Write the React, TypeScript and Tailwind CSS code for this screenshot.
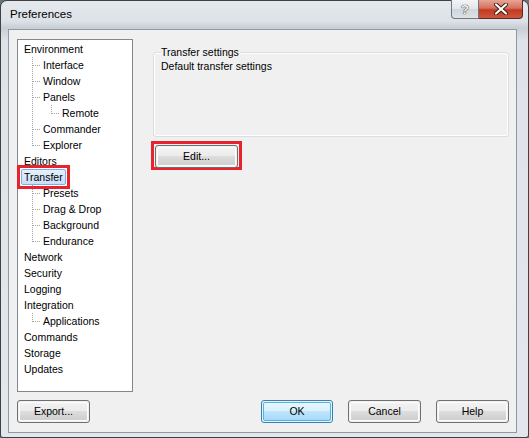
import React from "react";

type Node = { label: string; level: number; lines: ("none" | "pass" | "tee" | "end")[]; selected?: boolean };

const F = { fontFamily: '"Liberation Sans", Arial, sans-serif' };

const rows: Node[] = [
  { label: "Environment", level: 0, lines: [] },
  { label: "Interface", level: 1, lines: ["tee"] },
  { label: "Window", level: 1, lines: ["tee"] },
  { label: "Panels", level: 1, lines: ["tee"] },
  { label: "Remote", level: 2, lines: ["pass", "end"] },
  { label: "Commander", level: 1, lines: ["tee"] },
  { label: "Explorer", level: 1, lines: ["end"] },
  { label: "Editors", level: 0, lines: [] },
  { label: "Transfer", level: 0, lines: [], selected: true },
  { label: "Presets", level: 1, lines: ["tee"] },
  { label: "Drag & Drop", level: 1, lines: ["tee"] },
  { label: "Background", level: 1, lines: ["tee"] },
  { label: "Endurance", level: 1, lines: ["end"] },
  { label: "Network", level: 0, lines: [] },
  { label: "Security", level: 0, lines: [] },
  { label: "Logging", level: 0, lines: [] },
  { label: "Integration", level: 0, lines: [] },
  { label: "Applications", level: 1, lines: ["end"] },
  { label: "Commands", level: 0, lines: [] },
  { label: "Storage", level: 0, lines: [] },
  { label: "Updates", level: 0, lines: [] },
];

function Connector({ kind }: { kind: "none" | "pass" | "tee" | "end" }) {
  return (
    <svg width="19" height="16" className="shrink-0 block" shapeRendering="crispEdges">
      {kind !== "none" && (
        <line
          x1="8.5"
          y1="0"
          x2="8.5"
          y2={kind === "end" ? 9 : 16}
          stroke="#a0a0a0"
          strokeWidth="1"
          strokeDasharray="1 1"
        />
      )}
      {(kind === "tee" || kind === "end") && (
        <line x1="9" y1="8.5" x2="17" y2="8.5" stroke="#a0a0a0" strokeWidth="1" strokeDasharray="1 1" />
      )}
    </svg>
  );
}

function TreeRow({ n }: { n: Node }) {
  return (
    <div className="flex h-[16px] items-center">
      <div className="w-[6px] shrink-0" />
      {n.lines.map((k, i) => (
        <Connector key={i} kind={k} />
      ))}
      {n.selected ? (
        <div className="relative flex items-center">
          <div className="absolute -left-[7px] -right-[4px] -top-[4px] -bottom-[4px] border-[3px] border-[#e8232b]" />
          <span className="-ml-[3px] px-[2px] h-[16px] flex items-center rounded-[2px] border border-[#84acdd] bg-gradient-to-b from-[#e6f0fb] to-[#c9defa] leading-none text-[10.5px] text-black">
            {n.label}
          </span>
        </div>
      ) : (
        <span className="leading-none text-[10.5px] text-black whitespace-nowrap">{n.label}</span>
      )}
    </div>
  );
}

function Button({ label, w, primary }: { label: string; w: string; primary?: boolean }) {
  return (
    <div
      className={`${w} h-[23px] rounded-[3px] border ${
        primary ? "border-[#3c7fb1]" : "border-[#707070]"
      } p-px`}
    >
      <div
        className={`h-full w-full rounded-[2px] flex items-center justify-center text-[10.5px] text-black ${
          primary
            ? "bg-[linear-gradient(#eaf6fd_0%,#d9f0fc_50%,#bee6fd_50%,#a7d9f5_100%)] border border-[#48b7f0]"
            : "bg-[linear-gradient(#f2f2f2_0%,#ebebeb_50%,#dddddd_50%,#cfcfcf_100%)] border border-[#fcfcfc]"
        }`}
      >
        {label}
      </div>
    </div>
  );
}

export default function App() {
  return (
    <div style={F} className="w-[529px] h-[438px] bg-[#6b7077]">
      <div className="w-[529px] h-[438px] flex flex-col rounded-t-[7px] rounded-b-[3px] border border-[#3e4146] bg-[linear-gradient(#e4e9ee_0%,#dde2e8_20px,#c9ced4_27px,#dfe3e8_40px,#e3e7ec_100%)] pl-[7px] pr-[11px] pb-[4px]">
        {/* title bar */}
        <div className="h-[28px] flex items-start justify-between">
          <div className="pt-[8px] pl-[2px] text-[11.5px] text-black leading-none">Preferences</div>
          <div className="flex -mr-[6px] -mt-px">
            <div className="w-[28px] h-[19px] rounded-bl-[4px] border border-[#6f7680] border-t-0 bg-[linear-gradient(#f2f4f6_0%,#e2e6ea_50%,#cfd5db_50%,#dde2e7_100%)] flex items-center justify-center">
              <span className="text-[13px] font-bold leading-none text-[#f4f4f4] [text-shadow:0_0_1px_#222,0_0_1px_#222]">?</span>
            </div>
            <div className="w-[44px] h-[19px] rounded-br-[4px] border border-l-0 border-t-0 border-[#5c2a24] bg-[linear-gradient(#e8a597_0%,#d4715e_45%,#c2391f_55%,#d0573f_100%)] flex items-center justify-center">
              <svg width="14" height="12" viewBox="0 0 14 12">
                <path d="M2 1.5 L12 10.5 M12 1.5 L2 10.5" stroke="#3a1a14" strokeWidth="4" strokeLinecap="round" />
                <path d="M2 1.5 L12 10.5 M12 1.5 L2 10.5" stroke="#ffffff" strokeWidth="2.2" strokeLinecap="round" />
              </svg>
            </div>
          </div>
        </div>
        {/* client area */}
        <div className="flex-1 border border-[#8e99a6] bg-[#f0f0f0] flex flex-col pl-[8px] pr-[7px] pt-[9px]">
          <div className="flex">
            <div className="w-[116px] shrink-0 h-[353px] border border-[#828790] bg-white pt-[1px]">
              {rows.map((n, i) => (
                <TreeRow key={i} n={n} />
              ))}
            </div>
            <div className="ml-[20px] flex-1 pt-[7px]">
              <div className="relative w-[356px] h-[91px] pt-[6px]">
                <div className="h-[85px] rounded-[3px] border border-[#d5dfe5] shadow-[inset_0_0_0_1px_#ffffff] px-[7px] pt-[6px]">
                  <div className="text-[10.5px] leading-[14px] text-black">Default transfer settings</div>
                </div>
                <div className="absolute left-[8px] top-0 bg-[#f0f0f0] pr-[1px] text-[10.5px] leading-[12px] text-black">
                  Transfer settings
                </div>
              </div>
              <div className="mt-[4px] -ml-[2px] w-[91px] h-[29px] border-[3px] border-[#e8232b] p-px">
                <Button label="Edit..." w="w-[83px] h-[21px]" />
              </div>
            </div>
          </div>
          <div className="mt-[8px] flex items-center">
            <Button label="Export..." w="w-[73px]" />
            <div className="flex-1" />
            <div className="flex gap-[15px]">
              <Button label="OK" w="w-[72px]" primary />
              <Button label="Cancel" w="w-[73px]" />
              <Button label="Help" w="w-[73px]" />
            </div>
          </div>
        </div>
      </div>
    </div>
  );
}
